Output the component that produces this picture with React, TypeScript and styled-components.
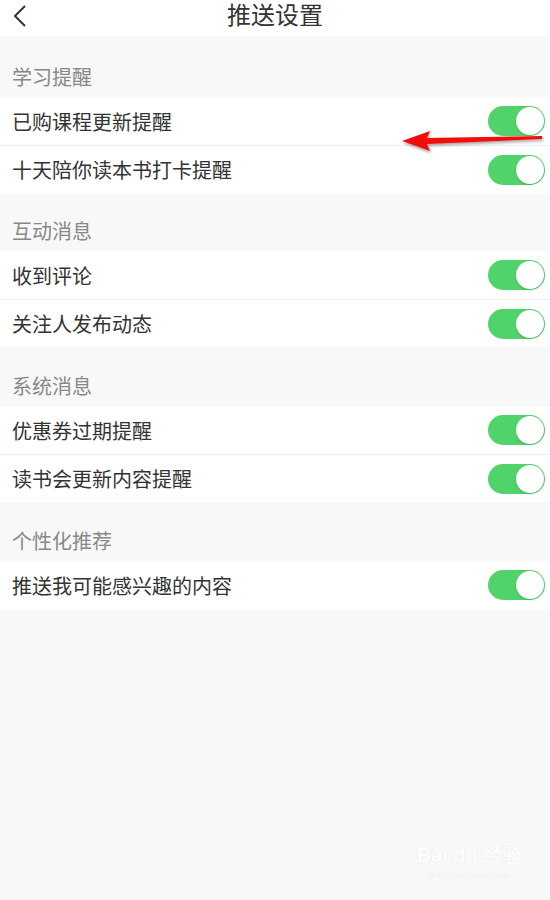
import { createGlobalStyle, styled } from 'styled-components';

const GlobalStyle = createGlobalStyle`
  html, body {
    margin: 0;
    padding: 0;
    background: #f8f8f8;
  }
  body {
    font-family: "Noto Sans CJK SC", "Noto Sans", sans-serif;
  }
`;

interface Section {
  title: string;
  items: string[];
  gap: number;
}

const sections: Section[] = [
  { title: '学习提醒', items: ['已购课程更新提醒', '十天陪你读本书打卡提醒'], gap: 61 },
  { title: '互动消息', items: ['收到评论', '关注人发布动态'], gap: 58 },
  { title: '系统消息', items: ['优惠券过期提醒', '读书会更新内容提醒'], gap: 59 },
  { title: '个性化推荐', items: ['推送我可能感兴趣的内容'], gap: 59 },
];

export default function App() {
  return (
    <Screen>
      <GlobalStyle />
      <Header>
        <BackButton>
          <svg width="16" height="24" viewBox="0 0 16 24">
            <path d="M13 2 L3 12 L13 22" fill="none" stroke="#333" strokeWidth="2" />
          </svg>
        </BackButton>
        <Title>推送设置</Title>
      </Header>
      {sections.map((section) => (
        <div key={section.title}>
          <SectionTitle $height={section.gap}>{section.title}</SectionTitle>
          <List>
            {section.items.map((item) => (
              <Row key={item}>
                <RowLabel>{item}</RowLabel>
                <Toggle>
                  <Knob />
                </Toggle>
              </Row>
            ))}
          </List>
        </div>
      ))}
      <Arrow width="142" height="24" viewBox="0 0 142 24">
        <defs>
          <filter id="sh" x="-10%" y="-50%" width="120%" height="200%">
            <feDropShadow dx="1" dy="2" stdDeviation="1.5" floodColor="#000" floodOpacity="0.35" />
          </filter>
        </defs>
        <path
          d="M0 13 L28 3 L25 10 L140 8 L140 11 L25 16 L28 23 Z"
          fill="#f20d0d"
          filter="url(#sh)"
        />
      </Arrow>
      <Watermark>
        <WatermarkLogo>Bai du 经验</WatermarkLogo>
        <WatermarkUrl>jingyan.baidu.com</WatermarkUrl>
      </Watermark>
    </Screen>
  );
}

const Screen = styled.div`
  position: relative;
  width: 550px;
  height: 900px;
  background: #f8f8f8;
  overflow: hidden;
`;

const Header = styled.div`
  position: relative;
  height: 36px;
  background: #fff;
  display: flex;
  align-items: flex-start;
  justify-content: center;
`;

const BackButton = styled.div`
  position: absolute;
  left: 12px;
  top: 4px;
  display: flex;
`;

const Title = styled.h1`
  margin: 0;
  font-size: 24px;
  font-weight: 400;
  color: #333;
  line-height: 28px;
`;

const SectionTitle = styled.div<{ $height: number }>`
  height: ${({ $height }) => $height}px;
  padding: 0 12px 6px;
  display: flex;
  align-items: flex-end;
  box-sizing: border-box;
  font-size: 20px;
  color: #888;
`;

const List = styled.div`
  background: #fff;
`;

const Row = styled.div`
  height: 48px;
  padding: 0 5px 0 12px;
  display: flex;
  align-items: center;
  justify-content: space-between;
  box-sizing: border-box;
  & + & {
    border-top: 1px solid #efefef;
  }
`;

const RowLabel = styled.span`
  font-size: 20px;
  color: #333;
`;

const Toggle = styled.div`
  width: 57px;
  height: 30px;
  border-radius: 15px;
  background: #4fd36a;
  display: flex;
  justify-content: flex-end;
  align-items: center;
  box-sizing: border-box;
  padding: 1px;
`;

const Knob = styled.div`
  width: 28px;
  height: 28px;
  border-radius: 50%;
  background: #fff;
  box-shadow: 0 1px 2px rgba(0, 0, 0, 0.2);
`;

const Arrow = styled.svg`
  position: absolute;
  left: 402px;
  top: 128px;
  overflow: visible;
`;

const Watermark = styled.div`
  position: absolute;
  left: 420px;
  top: 842px;
  width: 100px;
  display: flex;
  flex-direction: column;
  align-items: center;
  color: #fff;
  text-shadow: 0 0 1px rgba(0, 0, 0, 0.12);
  font-family: "Liberation Sans", sans-serif;
`;

const WatermarkLogo = styled.div`
  font-size: 20px;
  font-weight: 700;
  line-height: 26px;
  white-space: nowrap;
`;

const WatermarkUrl = styled.div`
  font-size: 10px;
  line-height: 14px;
  white-space: nowrap;
`;
